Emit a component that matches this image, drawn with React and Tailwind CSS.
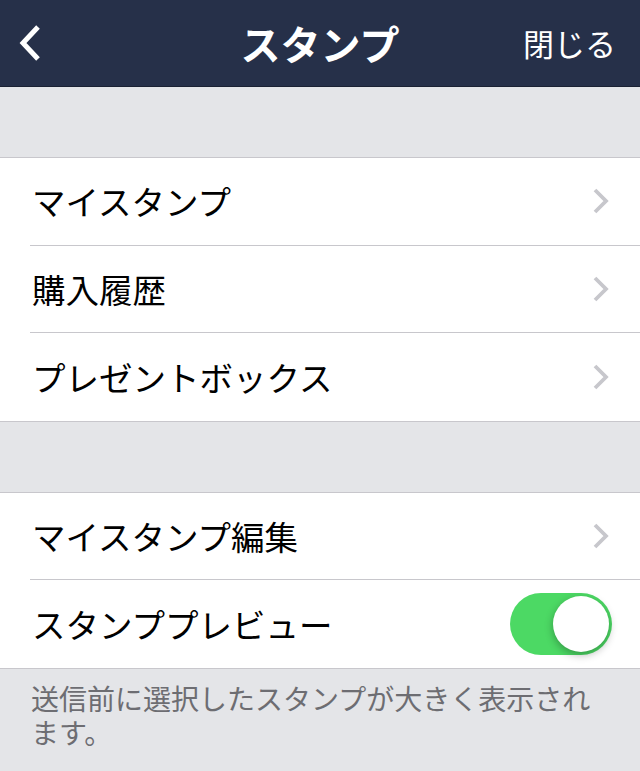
import { useState } from 'react';

const jp = { fontFamily: '"Noto Sans CJK JP", "Noto Sans", sans-serif' };

function Chevron() {
  return (
    <svg width="18" height="26" viewBox="0 0 18 26" className="shrink-0">
      <path d="M3 2 L14 13 L3 24" fill="none" stroke="#c7c7cc" strokeWidth="3.8" />
    </svg>
  );
}

function Row({ label, last, children }) {
  return (
    <div className="flex h-[87.5px] items-stretch pl-[30px]">
      <div className={`flex flex-1 items-center pr-[30px] ${last ? '' : 'border-b border-[#c8c7cc]'}`}>
        <span className="flex-1 pl-[2px] text-[33.5px] text-black">{label}</span>
        {children || <Chevron />}
      </div>
    </div>
  );
}

function Toggle({ on, onChange }) {
  return (
    <button
      onClick={() => onChange(!on)}
      className={`relative -mr-[2px] h-[62px] w-[102px] rounded-full ${on ? 'bg-[#4cd964]' : 'bg-[#e5e5ea]'}`}
    >
      <span
        className={`absolute top-[3px] h-[56px] w-[56px] rounded-full bg-white shadow-[0_3px_8px_rgba(0,0,0,0.3)] ${on ? 'left-[43px]' : 'left-[3px]'}`}
      />
    </button>
  );
}

export default function App() {
  const [preview, setPreview] = useState(true);

  return (
    <div className="flex h-[771px] w-[640px] flex-col bg-[#e4e5e8]" style={jp}>
      {/* Nav bar */}
      <header className="flex h-[87px] items-center border-b border-[#1a2133] bg-[#263049] px-[18px] text-white">
        <div className="w-[120px]">
          <svg width="24" height="38" viewBox="0 0 24 38">
            <path d="M20 3 L5 19 L20 35" fill="none" stroke="white" strokeWidth="5" />
          </svg>
        </div>
        <h1 className="flex-1 text-center text-[40px] font-bold">スタンプ</h1>
        <div className="w-[120px] pr-[6px] text-right text-[31px]">閉じる</div>
      </header>

      <div className="h-[70px]" />

      <section className="border-y border-[#c8c7cc] bg-white">
        <Row label="マイスタンプ" />
        <Row label="購入履歴" />
        <Row label="プレゼントボックス" last />
      </section>

      <div className="h-[70px]" />

      <section className="border-y border-[#c8c7cc] bg-white">
        <Row label="マイスタンプ編集" />
        <Row label="スタンププレビュー" last>
          <Toggle on={preview} onChange={setPreview} />
        </Row>
      </section>

      <p className="px-[31px] pt-[12px] text-[28px] leading-[34px] text-[#6d6d72]">
        送信前に選択したスタンプが大きく表示されます。
      </p>
    </div>
  );
}
